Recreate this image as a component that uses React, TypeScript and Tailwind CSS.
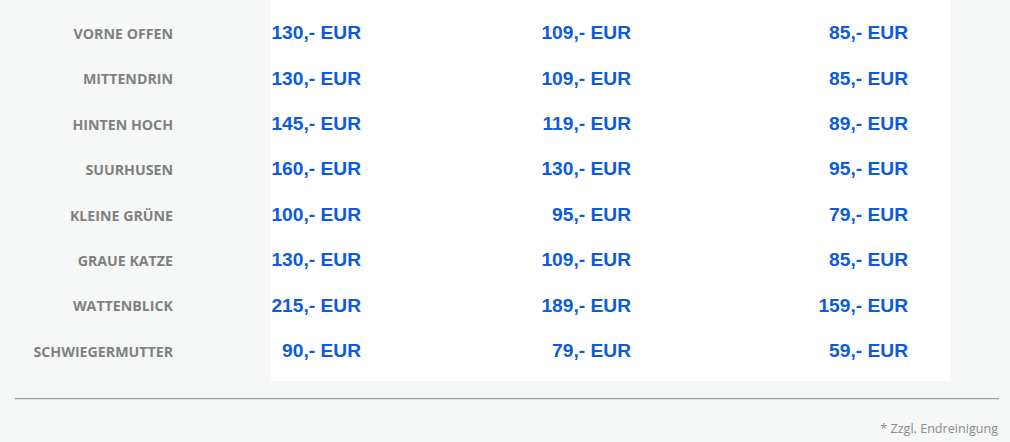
import React from "react";

const rows: [string, string, string, string][] = [
  ["VORNE OFFEN", "130,- EUR", "109,- EUR", "85,- EUR"],
  ["MITTENDRIN", "130,- EUR", "109,- EUR", "85,- EUR"],
  ["HINTEN HOCH", "145,- EUR", "119,- EUR", "89,- EUR"],
  ["SUURHUSEN", "160,- EUR", "130,- EUR", "95,- EUR"],
  ["KLEINE GRÜNE", "100,- EUR", "95,- EUR", "79,- EUR"],
  ["GRAUE KATZE", "130,- EUR", "109,- EUR", "85,- EUR"],
  ["WATTENBLICK", "215,- EUR", "189,- EUR", "159,- EUR"],
  ["SCHWIEGERMUTTER", "90,- EUR", "79,- EUR", "59,- EUR"],
];

export default function App() {
  return (
    <div className="w-[1010px] h-[442px] bg-[#f6f7f7] overflow-hidden">
      <div className="flex h-[381px]">
        <div className="w-[271px] pt-[11px]">
          {rows.map((r) => (
            <div
              key={r[0]}
              className="h-[45.4px] w-[173px] flex items-center justify-end text-[14.2px] font-bold text-[#808080]"
              style={{ fontFamily: '"Open Sans", "Noto Sans", sans-serif' }}
            >
              {r[0]}
            </div>
          ))}
        </div>
        <div className="w-[679px] bg-white pt-[11px]">
          {rows.map((r) => (
            <div
              key={r[0]}
              className="h-[45.4px] flex items-center text-[19.2px] font-bold text-[#0c5bdc]"
              style={{ fontFamily: '"Liberation Sans", Arial, sans-serif' }}
            >
              <div className="w-[90px] text-right">{r[1]}</div>
              <div className="w-[270px] text-right">{r[2]}</div>
              <div className="w-[277px] text-right">{r[3]}</div>
            </div>
          ))}
        </div>
      </div>
      <div className="ml-[15px] mr-[11px] mt-[17px] border-t border-t-[#9b9b9b] border-b border-b-[#e2e3e3]" />
      <div
        className="text-right pr-[12px] mt-[21px] text-[12.6px] text-[#8a8a8a] leading-[16px]"
        style={{ fontFamily: '"Open Sans", "Noto Sans", sans-serif' }}
      >
        * Zzgl. Endreinigung
      </div>
    </div>
  );
}
